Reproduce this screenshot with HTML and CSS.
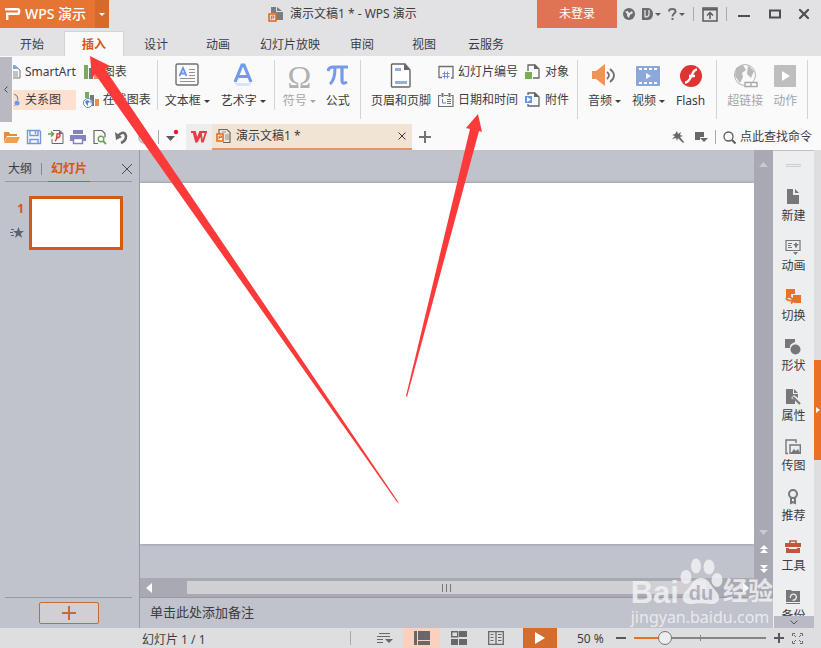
FILE: index.html
```html
<!DOCTYPE html>
<html lang="zh-CN">
<head>
<meta charset="utf-8">
<title>演示文稿1 * - WPS 演示</title>
<link rel="stylesheet" href="styles.css">
</head>
<body>
<header class="titlebar">
  <button class="brand" type="button">
    <svg width="16" height="14" viewBox="0 0 16 14" fill="none" stroke="#fff" stroke-width="2.4"><path d="M0 2.200H12.500a1.600 1.600 0 0 1 1.600 1.600v1.400a1.600 1.600 0 0 1-1.600 1.600H2.200V13"/></svg>
    <span>WPS 演示</span>
  </button>
  <button class="brand-menu" type="button" aria-label="菜单"><i class="caret"></i></button>
  <div class="doc-title">
    <svg width="16" height="15" viewBox="0 0 16 15"><path d="M3 0h5v5h7v8H8V6H3zM9 0l5 4H9z" fill="#7c7c7f"/><rect x="1" y="7" width="7" height="7" fill="#e2e2e5" stroke="#e36a24" stroke-width="1.6"/><path d="M3.400 12.500V9h2.400v2H3.400" fill="none" stroke="#e36a24"/></svg>
    <span>演示文稿1 * - WPS 演示</span>
  </div>
  <button class="login" type="button">未登录</button>
  <div class="window-tools">
    <button type="button" aria-label="皮肤"><svg width="12" height="12" viewBox="0 0 12 12"><circle cx="6" cy="6" r="6" fill="#6b6b6e"/><path d="M2 3.500L5 3l1 2 3-2 1 2-3 2-1 3-2-2V6z" fill="#e2e2e5"/></svg></button>
    <button type="button" aria-label="文库"><svg width="11" height="12" viewBox="0 0 11 12"><path d="M0 0h6c3 0 5 3 5 6s-2 6-5 6H0z" fill="#6b6b6e"/><path d="M3 2v7M7 2v4q0 3-4 3" fill="none" stroke="#e2e2e5" stroke-width="1.3"/></svg><i class="caret"></i></button>
    <button type="button" aria-label="帮助"><svg width="9" height="12" viewBox="0 0 9 12" fill="none" stroke="#6b6b6e" stroke-width="2"><path d="M1 3.500C1 .3 7.500 .3 7.500 3.500c0 2-3 2.200-3 5M4.500 10v2"/></svg><i class="caret"></i></button>
    <i class="rule"></i>
    <button type="button" aria-label="功能区"><svg width="16" height="15" viewBox="0 0 16 15" fill="none" stroke="#5b5b5e"><path d="M1 1h14v13H1z" stroke-width="1.500"/><path d="M1 2.500h14" stroke-width="2"/><path d="M8 12V6M5 8.500l3-3 3 3" stroke-width="1.500"/></svg></button>
    <i class="rule"></i>
    <div class="window-buttons">
      <button type="button" aria-label="最小化"><svg width="12" height="12" viewBox="0 0 12 12"><path d="M0 8h12" stroke="#4f4f52" stroke-width="2"/></svg></button>
      <button type="button" aria-label="最大化"><svg width="12" height="10" viewBox="0 0 12 10"><path d="M1 1.500h10v7H1z" fill="none" stroke="#4f4f52" stroke-width="2"/></svg></button>
      <button type="button" aria-label="关闭"><svg width="10" height="10" viewBox="0 0 10 10"><path d="M0 0l10 10M10 0L0 10" stroke="#4f4f52" stroke-width="2.200"/></svg></button>
    </div>
  </div>
</header>

<nav class="tabs">
  <a href="#">开始</a><a href="#" class="active">插入</a><a href="#">设计</a><a href="#">动画</a><a href="#" class="wide">幻灯片放映</a><a href="#">审阅</a><a href="#">视图</a><a href="#">云服务</a>
</nav>

<section class="ribbon">
  <button class="ribbon-scroll" type="button" aria-label="向左滚动"><svg width="4" height="7" viewBox="0 0 4 7" fill="none" stroke="#4b4b50"><path d="M3.500 .5l-3 3 3 3"/></svg></button>
  <div class="group first">
    <div class="stack">
      <button class="small" type="button"><svg width="8" height="14" viewBox="0 0 8 14" fill="none"><path d="M0 1h2l5 4v8H0" stroke="#77777a"/><path d="M0 0h2l4 4H0z" fill="#82a6ea"/><path d="M0 7h5M0 9h5M0 11h5" stroke="#8a8a8d"/></svg>SmartArt</button>
      <button class="small chosen" type="button"><svg width="8" height="14" viewBox="0 0 8 14"><path d="M1 1q4 1 4 6" fill="none" stroke="#77777a"/><circle cx="4" cy="10" r="2.500" fill="#6f98ea"/><path d="M1 13l2-2" stroke="#6f98ea"/></svg>关系图</button>
    </div>
    <div class="stack">
      <button class="small" type="button"><svg width="16" height="14" viewBox="0 0 16 14"><path d="M1 0h4v14H1z" fill="#79ad5c"/><path d="M6 3h4v11H6z" fill="#77777a"/><path d="M11 6h4v8h-4z" fill="#ef8c50"/></svg>图表</button>
      <button class="small" type="button"><svg width="16" height="16" viewBox="0 0 16 16"><path d="M2 0h4v6H2z" fill="#79ad5c"/><path d="M7 3h4v11H7z" fill="#77777a"/><path d="M12 7h4v7h-4z" fill="#ef8c50"/><circle cx="5" cy="11" r="4.500" fill="#fff" stroke="#5f86c4"/><path d="M2 9l3-1 2 2-2 1v3L3 12zM7 8l2 2-1 2z" fill="#5f86c4"/></svg>在线图表</button>
    </div>
  </div>
  <i class="divider short"></i>
  <div class="group text">
    <button class="large" type="button"><svg width="24" height="26" viewBox="0 0 24 26" fill="none"><rect x="1" y="2" width="22" height="21" rx="1.500" stroke="#707073" stroke-width="1.400"/><path d="M4.500 14L8 6l3.500 8M6 11.500h4" stroke="#6794e8" stroke-width="1.800"/><path d="M14 7.500h6M14 10.500h6M14 13.500h6M5 16.500h15M5 19.500h15" stroke="#929295"/></svg><span>文本框<i class="caret"></i></span></button>
    <button class="large" type="button"><svg width="24" height="26" viewBox="0 0 24 26" fill="none"><path d="M4 20L11 3h2l7 17M6.500 14.500h11" stroke="#739be9" stroke-width="3.200"/><path d="M3 21l3 3h12l3-3" fill="#d9e4fa"/></svg><span>艺术字<i class="caret"></i></span></button>
  </div>
  <i class="divider short"></i>
  <div class="group symbols">
    <button class="large" type="button" disabled><b class="glyph">Ω</b><span>符号<i class="caret"></i></span></button>
    <button class="large" type="button"><svg width="22" height="26" viewBox="0 0 22 26" fill="none" stroke="#739be9"><path d="M1 9q1-4 5-4h15" stroke-width="3.200"/><path d="M8 6q0 12-5 16" stroke-width="3"/><path d="M15 6v12q0 5 5 2" stroke-width="3.200"/></svg><span>公式</span></button>
  </div>
  <i class="divider"></i>
  <div class="group pages">
    <button class="large" type="button"><svg width="22" height="26" viewBox="0 0 22 26"><path d="M2.500 2H15l5 6v16a1 1 0 0 1-1 1H2.500a1 1 0 0 1-1-1V3a1 1 0 0 1 1-1z" fill="#fff" stroke="#66666a" stroke-width="1.400"/><path d="M14 2l6 6h-6z" fill="#66666a"/><path d="M5 6h6v3H5zM5 19h12v3H5z" fill="#8eafe9"/></svg><span>页眉和页脚</span></button>
    <div class="stack">
      <button class="small" type="button"><svg width="16" height="15" viewBox="0 0 16 15" fill="none"><path d="M4 12.500H1V1.500h14V13h-2" stroke="#707073" stroke-width="1.300"/><path d="M4.500 8.500h7M4.500 11.500h7M6.500 6.500v7M9.500 6.500v7" stroke="#6794e8"/></svg>幻灯片编号</button>
      <button class="small" type="button"><svg width="16" height="15" viewBox="0 0 16 15" fill="none" stroke="#707073"><path d="M3 2.500H.5v11h14.500v-11h-2M6 2.500h4" stroke-width="1.200"/><path d="M4.500 0v4M11.500 0v4" stroke-width="2"/><path d="M9 6.500h4M9 8.500h4M9 10.500h4"/><path d="M4.500 6v4H8" stroke="#5b83cf"/></svg>日期和时间</button>
    </div>
    <div class="stack">
      <button class="small" type="button"><svg width="16" height="16" viewBox="0 0 16 16"><path d="M3 7V1h7l4 4v9H8" fill="none" stroke="#66666a" stroke-width="1.300"/><path d="M9 0l5 5H9z" fill="#66666a"/><path d="M0 8h7v7H0z" fill="#78ae56"/></svg>对象</button>
      <button class="small" type="button"><svg width="16" height="16" viewBox="0 0 16 16"><path d="M3 3V1h7l4 4v9H3v-2" fill="none" stroke="#66666a" stroke-width="1.300"/><path d="M9 0l5 5H9z" fill="#66666a"/><path d="M0 4h7v7H0z" fill="#6794e8"/><path d="M2 5l4 2.500L2 10z" fill="#fff"/></svg>附件</button>
    </div>
  </div>
  <i class="divider"></i>
  <div class="group media">
    <button class="large" type="button"><svg width="24" height="26" viewBox="0 0 24 26"><path d="M0 9h4l9-7v22l-9-7H0z" fill="#ef9458"/><path d="M15 10q4 3 0 7M18 7q8 6.500 0 13" fill="none" stroke="#707073" stroke-width="1.800"/></svg><span>音频<i class="caret"></i></span></button>
    <button class="large" type="button"><svg width="24" height="26" viewBox="0 0 24 26"><rect y="4" width="24" height="20" rx="1" fill="#8ca8db"/><path d="M3 7h19M3 21h19" stroke="#fff" stroke-width="2" stroke-dasharray="3 2"/><path d="M10 11l5 3-5 3z" fill="#fff"/></svg><span>视频<i class="caret"></i></span></button>
    <button class="large" type="button"><svg width="24" height="26" viewBox="0 0 24 26"><circle cx="12" cy="14" r="11" fill="#df3434"/><path d="M18 7.500c-6 0-5 13-12 13M10 14h6" fill="none" stroke="#fff" stroke-width="2.400"/></svg><span>Flash</span></button>
  </div>
  <i class="divider"></i>
  <div class="group">
    <button class="large" type="button" disabled><svg width="26" height="26" viewBox="0 0 26 26"><circle cx="13" cy="13" r="10.500" fill="#fafafa" stroke="#b5b5b7"/><path d="M4 6l7-3 3 5-4 3 1 4-3 6-5-7zM16 3l6 6-3 7-4-4zM3 11l5 1-1 4z" fill="#b9b9bb"/><path d="M13 20.500h6v4h-6zM19 20.500h6v4h-6z" fill="#fff" stroke="#a9a9ab" stroke-width="1.400"/></svg><span>超链接</span></button>
    <button class="large" type="button" disabled><svg width="22" height="26" viewBox="0 0 22 26"><rect y="3" width="22" height="22" rx="1" fill="#bebec0"/><path d="M8 9l8 5-8 5z" fill="#fff"/></svg><span>动作</span></button>
  </div>
  <i class="divider"></i>
</section>

<section class="quickbar">
  <div class="quick-icons">
    <button type="button" aria-label="打开"><svg width="16" height="14" viewBox="0 0 16 14"><path d="M0 12V2h5l1 2h7v2H3z" fill="#e68a35"/><path d="M3 7h13l-3 6H0z" fill="#f0a04f"/></svg></button>
    <button type="button" aria-label="保存"><svg width="16" height="16" viewBox="0 0 16 16" fill="none" stroke="#6f98df" stroke-width="1.400"><path d="M1.500 1.500h12l1 1v12h-13zM4 1.500v5h8v-5M4 14.500v-4h8v4M9.500 2v3"/></svg></button>
    <button type="button" aria-label="输出为PDF"><svg width="16" height="16" viewBox="0 0 16 16" fill="none"><path d="M5 1.500h7l3 3v10H4V10" stroke="#68686b"/><path d="M11 1l4 4h-4z" fill="#68686b"/><path d="M7 12q2-1 2-7c4-1 4 3 0 4" stroke="#d64545" stroke-width="1.500"/><path d="M0 5h5M3 2.500L5.500 5 3 7.500" stroke="#66a744" stroke-width="1.600"/></svg></button>
    <button type="button" aria-label="打印"><svg width="16" height="16" viewBox="0 0 16 16"><path d="M3 1h10v4H3zM0 6h16v6H0z" fill="#8583be"/><path d="M3.500 9.500h9v5h-9z" fill="#fff" stroke="#8583be" stroke-width="1.500"/></svg></button>
    <button type="button" aria-label="打印预览"><svg width="16" height="16" viewBox="0 0 16 16" fill="none"><path d="M6 14.500H2v-13h8l3 3v4" stroke="#68686b" stroke-width="1.200"/><circle cx="9" cy="10" r="2.800" stroke="#6aa55b" stroke-width="1.400"/><path d="M11 12l3 3" stroke="#6aa55b" stroke-width="1.800"/></svg></button>
    <button type="button" aria-label="撤销"><svg width="16" height="16" viewBox="0 0 16 16"><path d="M3 8q7-8 9-1 0 5-5 7" fill="none" stroke="#69696c" stroke-width="2.600"/><path d="M1 3l1 8 6-3z" fill="#69696c"/></svg></button>
    <button type="button" aria-label="恢复"><svg width="16" height="16" viewBox="0 0 16 16"><path d="M10 4Q3 3 3 9q1 4 5 5M12 5v6" fill="none" stroke="#c3c3c6" stroke-width="2"/></svg></button>
  </div>
  <i class="rule"></i>
  <button class="more" type="button" aria-label="自定义快速访问"><svg width="14" height="16" viewBox="0 0 14 16"><path d="M0 7h9l-4.500 5z" fill="#5b5b5e"/><circle cx="10" cy="3" r="2.200" fill="#f01820"/></svg></button>
  <button class="home" type="button" aria-label="WPS 首页"><svg width="16" height="12" viewBox="0 0 16 12" fill="none" stroke="#e43e43" stroke-width="1.800"><path d="M0 1h4l2 8 3-8h7M2.500 1L5 10.500h1L10 3l1 7.500h1L15 1"/></svg></button>
  <div class="doc-tab">
    <svg width="16" height="16" viewBox="0 0 16 16" fill="none"><path d="M3 6V1.500h8l3 3v10H7" stroke="#68686b" stroke-width="1.200"/><path d="M6 4h4M9 7h4M9 9h4M9 11h4" stroke="#929295"/><path d="M1 6h6v7H1z" fill="#fff" stroke="#df6923" stroke-width="1.600"/><path d="M3 11.500V8h2.500v1.500H3" stroke="#df6923"/></svg>
    <span>演示文稿1 *</span>
    <button type="button" aria-label="关闭文档"><svg width="8" height="8" viewBox="0 0 8 8" stroke="#3b3b3e"><path d="M.5.5l7 7m0-7l-7 7"/></svg></button>
  </div>
  <button class="new-tab" type="button" aria-label="新建文档"><svg width="12" height="12" viewBox="0 0 12 12" stroke="#737376" stroke-width="2"><path d="M0 6h12M6 0v12"/></svg></button>
  <div class="quick-right">
    <button type="button" aria-label="美化"><svg width="12" height="12" viewBox="0 0 12 12" fill="#68686b"><path d="M5 0l1 3 3-2-1 3 3 1-3 1 4 5-1 1-5-5-1 3-1-3-4 1 3-3-3-1 3-1z"/></svg></button>
    <button type="button" aria-label="窗口"><svg width="13" height="12" viewBox="0 0 13 12" fill="#68686b"><path d="M0 1h9v5H5v3H0zM5 7h8l-4 4z"/></svg></button>
    <i class="rule"></i>
    <button class="find" type="button"><svg width="13" height="13" viewBox="0 0 13 13" fill="none" stroke="#5b5b5e"><circle cx="5.500" cy="5.500" r="4.500" stroke-width="1.300"/><path d="M9 9l3.500 3.500" stroke-width="2"/></svg>点此查找命令</button>
  </div>
</section>

<main class="workspace">
  <aside class="outline">
    <div class="outline-tabs"><a href="#">大纲</a><i></i><a href="#" class="active">幻灯片</a><button type="button" aria-label="关闭窗格"><svg width="10" height="10" viewBox="0 0 10 10" stroke="#4b4b50"><path d="M0 0l10 10M10 0L0 10"/></svg></button></div>
    <div class="thumb-row">
      <div class="thumb-meta"><b>1</b><svg width="14" height="12" viewBox="0 0 14 12" fill="#5a6474"><path d="M8.500 0l1.400 4H14l-3.200 2.500L12 11 8.500 8.300 5 11l1.200-4.500L3 4h4z"/><path d="M1 2h3v1H1zM0 5h3v1H0zM1 8h3v1H1z"/></svg></div>
      <button class="thumb" type="button" aria-label="幻灯片 1"></button>
    </div>
    <div class="outline-foot"><button type="button" aria-label="新建幻灯片"><svg width="14" height="14" viewBox="0 0 14 14" stroke="#cb6834" stroke-width="2"><path d="M0 7h14M7 0v14"/></svg></button></div>
  </aside>

  <section class="editor">
    <div class="stage">
      <div class="canvas"><div class="slide"></div></div>
      <div class="vscroll">
        <svg width="9" height="5" viewBox="0 0 9 5"><path d="M0 5l4.500-5L9 5z" fill="#c9c9ce"/></svg>
        <div class="vscroll-end">
          <svg width="9" height="5" viewBox="0 0 9 5"><path d="M0 0h9L4.500 5z" fill="#c9c9ce"/></svg>
          <svg width="8" height="9" viewBox="0 0 8 9" fill="#fff"><path d="M0 4l4-4 4 4zM0 8l4-4 4 4z"/></svg>
          <svg width="8" height="9" viewBox="0 0 8 9" fill="#fff"><path d="M0 1h8L4 5zM0 5h8L4 9z"/></svg>
        </div>
      </div>
    </div>
    <div class="hscroll">
      <svg width="6" height="10" viewBox="0 0 6 10"><path d="M6 0v10L0 5z" fill="#fff"/></svg>
      <div class="hthumb"><i></i><i></i><i></i></div>
      <svg width="6" height="10" viewBox="0 0 6 10"><path d="M0 0v10l6-5z" fill="#fff"/></svg>
    </div>
    <div class="notes">单击此处添加备注</div>
    <div class="watermark" aria-hidden="true">
      <div class="wm-top"><span>Bai</span><svg width="44" height="48" viewBox="0 0 44 48" fill="#f1f1f4"><ellipse cx="7" cy="19" rx="5.500" ry="7"/><ellipse cx="17" cy="8" rx="5" ry="7.500"/><ellipse cx="30" cy="9" rx="5.500" ry="7.500"/><ellipse cx="38" cy="22" rx="5.500" ry="7"/><path d="M22 20c8 0 9 7 14 12 8 8 3 15-5 14-6-1-12-1-18 0-9 1-13-7-5-14 5-5 6-12 14-12z"/></svg><em>du</em><span class="cn">经验</span></div>
      <div class="wm-url">jingyan.baidu.com</div>
    </div>
  </section>

  <aside class="tools">
    <i class="grip"></i>
    <div class="tool-list">
      <button type="button"><svg width="16" height="16" viewBox="0 0 16 16" fill="#77777a"><path d="M2 0h6v6h6v9H2zM10 0l4 4h-4z"/></svg>新建</button>
      <button type="button"><svg width="16" height="16" viewBox="0 0 16 16" fill="none" stroke="#77777a"><path d="M1 1.500h14v10H1zM3 4.500h4M3 6.500h3M3 8.500h4" stroke-width="1.200"/><path d="M11 3l1 2h2l-2 2v2l-1-1-1 1V7L8 5h2zM8 13h5l-2.500 3z" fill="#77777a" stroke="none"/></svg>动画</button>
      <button type="button"><svg width="16" height="16" viewBox="0 0 16 16" fill="#e9712a"><path d="M1 0h9v5H6v4H1zM8 6h8v8H9v-3L6 9h2z"/><path d="M1 9q1 3 7 2.500M6 8.500l3 3-3 3" fill="none" stroke="#e9712a" stroke-width="1.800"/></svg>切换</button>
      <button type="button"><svg width="16" height="16" viewBox="0 0 16 16" fill="#77777a"><path d="M0 0h10v3q-6 2-5 6H0z"/><circle cx="10.500" cy="10.500" r="5"/></svg>形状</button>
      <button type="button"><svg width="16" height="16" viewBox="0 0 16 16" fill="#77777a"><path d="M1 0h7v5h5v4L9 6 6 9l4 2v4H1zM9 0l4 4H9z"/><path d="M8 8l7 7" stroke="#77777a" stroke-width="2"/></svg>属性</button>
      <button type="button"><svg width="16" height="16" viewBox="0 0 16 16" fill="none" stroke="#77777a" stroke-width="1.400"><path d="M3 14.500H1V1h10v3M5 6h10.300v8.300H5z"/><path d="M6 14l3-4 2 2 2-2 2 4z" fill="#77777a" stroke="none"/></svg>传图</button>
      <button type="button"><svg width="16" height="16" viewBox="0 0 16 16" fill="none" stroke="#77777a" stroke-width="2"><circle cx="8" cy="5" r="4"/><path d="M6 9v5l2-1 2 1V9"/></svg>推荐</button>
      <button type="button"><svg width="16" height="16" viewBox="0 0 16 16" fill="#bd583c"><path d="M5 4V2h6v2" fill="none" stroke="#bd583c" stroke-width="1.600"/><path d="M0 4h16v4H0zM1 9h3v1h8V9h3v5H1z"/></svg>工具</button>
      <button type="button"><svg width="16" height="16" viewBox="0 0 16 16"><path d="M1 1h5l1 1h8v11H1zM1 14h14v1H1z" fill="#77777a"/><path d="M5.500 9a3 3 0 1 1 2 2" fill="none" stroke="#edeef0" stroke-width="1.300"/></svg>备份</button>
    </div>
    <button class="tools-more" type="button" aria-label="更多"><svg width="8" height="5" viewBox="0 0 8 5" fill="none" stroke="#55555a"><path d="M.5.5L4 4 7.500.5"/></svg></button>
  </aside>
  <div class="edge"><button type="button" aria-label="展开任务窗格"><svg width="4" height="6" viewBox="0 0 4 6"><path d="M0 0l4 3-4 3z" fill="#fff"/></svg></button></div>
</main>

<footer class="statusbar">
  <span class="page">幻灯片 1 / 1</span>
  <i class="rule"></i>
  <div class="views">
    <button type="button" aria-label="备注"><svg width="16" height="12" viewBox="0 0 16 12" fill="none" stroke="#68686b"><path d="M2 1.500h11M0 4.500h13M0 7.500h6M0 10.500h6" stroke-width="1.200"/><path d="M8 7h8l-4 4z" fill="#68686b" stroke="none"/></svg></button>
    <button type="button" class="active" aria-label="普通视图"><svg width="16" height="14" viewBox="0 0 16 14" fill="#68686b"><path d="M0 0h3v14H0zM4 0h12v9H4zM4 10h12v4H4z"/></svg></button>
    <button type="button" aria-label="幻灯片浏览"><svg width="16" height="14" viewBox="0 0 16 14" fill="#68686b"><path d="M.7.7h6v5h-6z" fill="none" stroke="#68686b" stroke-width="1.400"/><path d="M8 0h8v6H8zM0 8h7v6H0zM8 8h8v6H8z"/></svg></button>
    <button type="button" aria-label="阅读视图"><svg width="16" height="14" viewBox="0 0 16 14" fill="none" stroke="#68686b"><path d="M.7.7h14.600v12.600H.7zM8 1v12" stroke-width="1.300"/><path d="M2.500 3.500h3M2.500 6.500h3M2.500 9.500h3M10 3.500h3.500M10 6.500h3.500M10 9.500h3.500"/></svg></button>
  </div>
  <button class="play" type="button" aria-label="放映"><svg width="10" height="12" viewBox="0 0 10 12"><path d="M0 0l10 6-10 6z" fill="#fff"/></svg></button>
  <label class="percent" for="zoom">50 %</label>
  <button class="step" type="button" aria-label="缩小"><svg width="10" height="10" viewBox="0 0 10 10" stroke="#59595c" stroke-width="2"><path d="M0 5h10"/></svg></button>
  <input id="zoom" type="range" min="0" max="100" value="20">
  <button class="step" type="button" aria-label="放大"><svg width="10" height="10" viewBox="0 0 10 10" stroke="#59595c" stroke-width="2"><path d="M0 5h10M5 0v10"/></svg></button>
  <button class="fit" type="button" aria-label="适应窗口"><svg width="11" height="11" viewBox="0 0 11 11" fill="none" stroke="#68686b"><path d="M.5 3V.5H3M8 .5h2.500V3M10.500 8v2.500H8M3 10.500H.5V8M2 2l2 2M9 2L7 4M2 9l2-2M9 9L7 7"/></svg></button>
</footer>

<svg class="pointers" width="821" height="648" viewBox="0 0 821 648" fill="#fc3a3a" aria-hidden="true"><path d="M90 56L110 66 105 69 399 503 397 502 95 74 92 78z"/><path d="M478 114L482 132 479 131 407 397 406 396 470 129 466 128z"/></svg>
</body>
</html>
```
FILE: styles.css
```css
* { box-sizing: border-box; }
body {
  margin: 0;
  min-height: 100vh;
  display: flex;
  flex-direction: column;
  background: #dedee0;
  color: #3c3c3f;
  font: 12px/16px "Noto Sans", "Noto Sans CJK SC", sans-serif;
  overflow: hidden;
}
button {
  display: flex;
  align-items: center;
  justify-content: center;
  margin: 0;
  padding: 0;
  border: 0;
  background: none;
  color: inherit;
  font: inherit;
  white-space: nowrap;
}
a { color: inherit; text-decoration: none; }
svg { display: block; flex: none; }
.caret {
  flex: none;
  border: 3px solid transparent;
  border-top-color: currentColor;
  border-bottom: 0;
}
.rule { flex: none; width: 1px; height: 14px; background: #a9a9ac; }

/* Title bar */
.titlebar { display: flex; height: 28px; background: #e2e2e5; }
.brand { justify-content: flex-start; width: 95px; gap: 4px; padding-left: 5px; background: #e67534; color: #fff; font-size: 14px; font-weight: 500; }
.brand-menu { width: 14px; background: #d66a2d; color: #fff; }
.doc-title { display: flex; flex: 1; align-items: center; gap: 6px; padding-left: 159px; white-space: nowrap; }
.login { width: 80px; background: #e07354; color: #fff; }
.window-tools { display: flex; align-items: center; gap: 7px; width: 204px; padding: 0 12px 0 6px; color: #5b5b5e; }
.window-tools button { gap: 2px; }
.window-tools .rule { margin: 0 1px; }
.window-buttons { display: flex; flex: 1; align-items: center; justify-content: space-between; padding-left: 3px; }

/* Tabs */
.tabs { display: flex; align-items: flex-end; height: 28px; padding-left: 1px; background: #e2e2e5; }
.tabs a { width: 62px; padding: 6px 0 3px; text-align: center; white-space: nowrap; }
.tabs a.wide { width: 82px; }
.tabs .active { width: 60px; margin: 0 1px; padding-top: 5px; background: #fafafa; border: 1px solid #d4d4d7; border-bottom: 0; color: #d4560f; font-weight: 700; }

/* Ribbon */
.ribbon { display: flex; align-items: flex-start; height: 68px; background: #fafafa; }
.ribbon-scroll { width: 12px; height: 65px; margin-top: 1px; background: #b9b9c2; }
.group { display: flex; gap: 10px; padding: 6px 10px 0; }
.group.first { gap: 7px; padding: 6px 6px 0 1px; }
.group.text { gap: 11px; padding: 6px 8px 0 7px; }
.group.symbols { padding-left: 8px; }
.group.pages { gap: 7px; padding-right: 8px; }
.group.media { gap: 11px; padding-right: 11px; }
.divider { width: 1px; height: 59px; margin-top: 4px; background: #d4d4d7; }
.divider.short { height: 50px; }
.stack { display: flex; flex-direction: column; gap: 8px; }
.small { justify-content: flex-start; gap: 4px; height: 20px; }
.chosen { background: #fde1ce; }
.large { flex-direction: column; justify-content: flex-start; gap: 3px; }
.large span { display: flex; align-items: center; gap: 3px; line-height: 20px; }
.large:disabled { color: #a5a5a8; }
.glyph { height: 26px; font: 32px/30px "Liberation Serif", serif; color: #b0b0b3; }

/* Quick access and document tabs */
.quickbar { display: flex; align-items: center; height: 26px; background: #fafafa; }
.quick-icons { display: flex; gap: 6px; padding: 0 6px 0 4px; }
.more { width: 27px; }
.home { width: 26px; height: 26px; background: #ededee; }
.doc-tab { display: flex; align-items: center; width: 200px; height: 26px; gap: 4px; padding: 0 6px 0 4px; background: #f2e4d4; border-bottom: 2px solid #e99468; }
.doc-tab button { margin-left: auto; }
.new-tab { width: 26px; }
.quick-right { display: flex; align-items: center; gap: 7px; margin-left: auto; padding-right: 9px; }
.quick-right button:first-child { margin-right: 4px; }
.find { gap: 4px; }

/* Workspace */
.workspace { display: flex; flex: 1; min-height: 0; background: #c0c2cc; }
.outline { display: flex; flex-direction: column; width: 140px; border-right: 1px solid #989aa3; }
.outline-tabs { display: flex; align-items: center; height: 32px; margin: 0 7px 14px 5px; padding: 6px 0 0 3px; border-bottom: 1px solid #989aa3; }
.outline-tabs i { width: 1px; height: 12px; margin: 0 6px 0 9px; background: #88888f; }
.outline-tabs .active { margin-bottom: -1px; padding: 5px 3px 4px; border-bottom: 1px solid #d45a14; color: #d4560f; font-weight: 700; }
.outline-tabs button { margin-left: auto; }
.thumb-row { display: flex; gap: 5px; padding-left: 12px; }
.thumb-meta { display: flex; flex-direction: column; align-items: flex-end; gap: 10px; width: 12px; padding-top: 5px; color: #d4560f; }
.thumb { width: 94px; height: 54px; background: #fff; border: 3px solid #d45a14; }
.outline-foot { display: flex; justify-content: center; height: 31px; margin: auto 7px 0 5px; padding-top: 4px; border-top: 1px solid #989aa3; }
.outline-foot button { width: 60px; height: 22px; border: 1px solid #cb6834; border-radius: 2px; background: #d0d0d4; }

.editor { position: relative; display: flex; flex: 1; flex-direction: column; min-width: 0; }
.stage { display: flex; flex: 1; }
.canvas { flex: 1; padding: 33px 0 34px; }
.slide { height: 100%; background: #fff; box-shadow: 0 0 3px #85879a; clip-path: inset(-4px 0); }
.vscroll { display: flex; flex-direction: column; align-items: center; justify-content: space-between; width: 19px; padding: 12px 0 5px; background: #a9a9b3; }
.vscroll-end { display: flex; flex-direction: column; align-items: center; gap: 10px; }
.hscroll { display: flex; align-items: center; justify-content: space-between; height: 20px; padding: 0 24px 0 6px; background: #a9a9b3; border-bottom: 1px solid #989aa3; }
.hthumb { display: flex; align-items: center; justify-content: center; flex: 1; height: 13px; gap: 3px; margin: 0 37px 0 35px; background: #d0d0d4; }
.hthumb i { width: 1px; height: 8px; background: #77777d; }
.notes { height: 30px; padding: 6px 10px; font-size: 13px; line-height: 16px; }

.watermark { position: absolute; right: 0; bottom: 0; color: #f1f1f4; opacity: .85; font-family: "Liberation Sans", "Noto Sans CJK SC", sans-serif; }
.wm-top { position: relative; display: flex; align-items: flex-end; height: 48px; font-size: 31px; line-height: 26px; font-weight: 700; }
.wm-top em { position: absolute; left: 58px; bottom: 0; color: #aeb0bb; font-size: 20px; font-style: normal; line-height: 26px; }
.wm-top .cn { font-size: 25px; line-height: 30px; }
.wm-url { font: 16px/22px "Noto Sans", sans-serif; }

.tools { display: flex; flex-direction: column; align-items: center; width: 41px; margin-top: 1px; background: #edeef0; }
.grip { width: 15px; height: 3px; margin: 13px 0 22px; border: 1px solid #cbcddc; border-width: 1px 0; }
.tool-list { display: flex; flex: 1 1 0; flex-direction: column; gap: 12px; min-height: 0; overflow: hidden; }
.tool-list button { flex: none; flex-direction: column; justify-content: flex-start; gap: 1px; height: 38px; line-height: 20px; }
.tools-more { width: 40px; height: 12px; background: #b9bac3; }
.edge { display: flex; align-items: center; width: 7px; padding-top: 42px; background: #dedee0; }
.edge button { width: 7px; height: 100px; background: #ea7025; }

/* Status bar */
.statusbar { display: flex; align-items: center; height: 20px; padding: 0 18px 0 142px; background: #dedee0; white-space: nowrap; }
.page { width: 208px; padding-top: 3px; }
.views { display: flex; margin-left: 15px; }
.views button { width: 37px; height: 20px; }
.views .active { background: #fbd1bd; }
.play { width: 34px; height: 20px; margin-left: 9px; background: #d46c2e; }
.percent { width: 59px; padding: 2px 0 0 20px; }
.step { width: 10px; }
#zoom { flex: 1; min-width: 0; height: 16px; margin: 0 8px; appearance: none; background: linear-gradient(#858589, #858589) center / 1px 6px no-repeat, linear-gradient(90deg, #ea7025 22%, #858589 22%) center / 100% 2px no-repeat; }
#zoom::-webkit-slider-thumb { appearance: none; width: 14px; height: 14px; border: 1px solid #77777a; border-radius: 50%; background: #ededef; }
.fit { margin-left: 8px; }

.pointers { position: absolute; left: 0; top: 0; pointer-events: none; }
```
